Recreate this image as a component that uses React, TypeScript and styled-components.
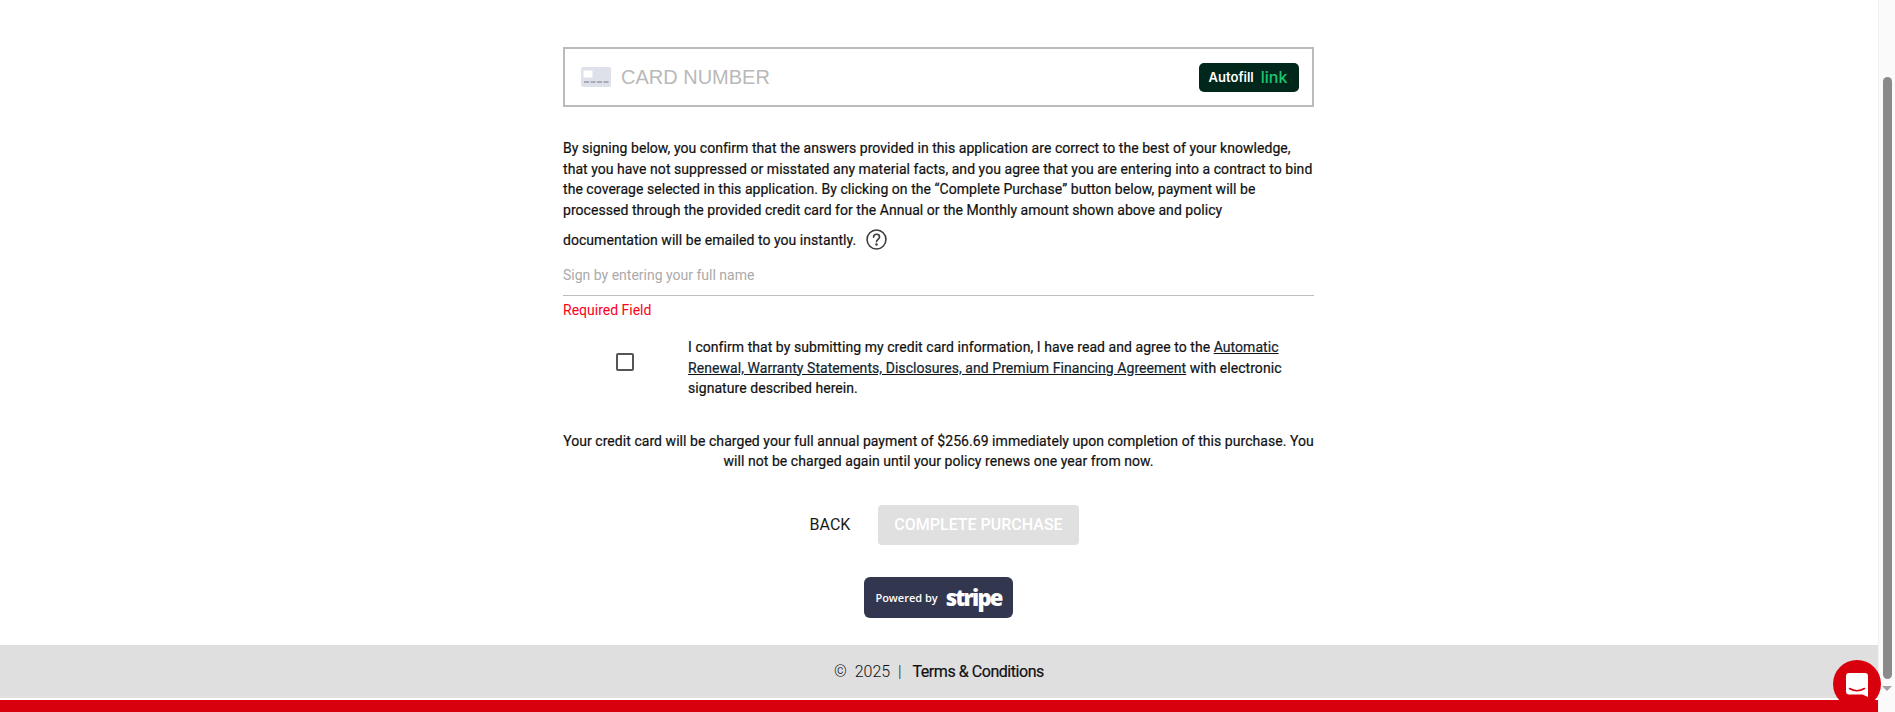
import { createGlobalStyle, css, styled } from "styled-components";

const GlobalStyle = createGlobalStyle`
  html, body {
    margin: 0;
    padding: 0;
    height: 100%;
    overflow: hidden;
    background: #fff;
  }
  * { box-sizing: border-box; }
`;

const CardIcon = () => (
  <svg width="30" height="20" viewBox="0 0 30 20">
    <rect width="30" height="20" rx="2" fill="#dfe1ea" />
    <rect x="2.500" y="3.500" width="9" height="7" fill="#fff" />
    <g fill="#a9adbc">
      <rect x="3" y="14" width="5" height="2" />
      <rect x="9.500" y="14" width="5" height="2" />
      <rect x="16" y="14" width="5" height="2" />
      <rect x="22.500" y="14" width="5" height="2" />
    </g>
  </svg>
);

const HelpIcon = () => (
  <svg width="21" height="21" viewBox="0 0 20 20" fill="none" stroke="#3c3c3c" strokeWidth="1.500">
    <circle cx="10" cy="10" r="9" />
    <path d="M7.200 7.800c0-1.700 1.300-2.800 2.900-2.800s2.800 1 2.800 2.500c0 2.300-2.900 2.300-2.900 4.700" strokeLinecap="round" />
    <circle cx="10" cy="14.800" r="0.500" fill="#3c3c3c" />
  </svg>
);

const ChatIcon = () => (
  <svg width="22" height="24" viewBox="0 0 22 24">
    <path d="M3 0h16a3 3 0 0 1 3 3v21l-5.500-2.500H3a3 3 0 0 1-3-3V3a3 3 0 0 1 3-3z" fill="#fff" />
    <path d="M3.500 15.500c4.500 2.600 10.500 2.600 15 0" fill="none" stroke="#d9000d" strokeWidth="1.500" strokeLinecap="round" />
  </svg>
);

const App = () => {
  return (
    <Page>
      <GlobalStyle />
      <Main>
        <Content>
          <CardField>
            <CardIcon />
            <CardPlaceholder>CARD NUMBER</CardPlaceholder>
            <AutofillButton>
              Autofill <LinkWord>link</LinkWord>
            </AutofillButton>
          </CardField>
          <Legal>
            By signing below, you confirm that the answers provided in this application are
            correct to the best of your knowledge,
            <br />
            that you have not suppressed or misstated any material facts, and you agree that you
            are entering into a contract to bind
            <br />
            the coverage selected in this application. By clicking on the “Complete Purchase”
            button below, payment will be
            <br />
            processed through the provided credit card for the Annual or the Monthly amount shown
            above and policy
          </Legal>
          <LegalLast>
            documentation will be emailed to you instantly.
            <HelpIcon />
          </LegalLast>
          <SignatureInput placeholder="Sign by entering your full name" />
          <RequiredText>Required Field</RequiredText>
          <ConfirmRow>
            <CheckCell>
              <CheckBox />
            </CheckCell>
            <ConfirmText>
              I confirm that by submitting my credit card information, I have read and agree to
              the{" "}
              <ConfirmLink href="#">
                Automatic Renewal, Warranty Statements, Disclosures, and Premium Financing Agreement
              </ConfirmLink>{" "}
              with electronic signature described herein.
            </ConfirmText>
          </ConfirmRow>
          <ChargeText>
            Your credit card will be charged your full annual payment of $256.69 immediately upon
            completion of this purchase. You will not be charged again until your policy renews
            one year from now.
          </ChargeText>
          <Actions>
            <BackButton>BACK</BackButton>
            <PurchaseButton disabled>COMPLETE PURCHASE</PurchaseButton>
          </Actions>
          <StripeBadge>
            <PoweredBy>Powered by</PoweredBy>
            <StripeWord>stripe</StripeWord>
          </StripeBadge>
        </Content>
        <Footer>
          <Copyright>©&nbsp; 2025 &nbsp;|</Copyright>
          <TermsLink>Terms &amp; Conditions</TermsLink>
        </Footer>
        <RedBar />
      </Main>
      <ScrollTrack>
        <ScrollThumb />
        <ScrollArrow />
      </ScrollTrack>
      <ChatBubble>
        <ChatIcon />
      </ChatBubble>
    </Page>
  );
};

const bodyText = css`
  font-size: 14px;
  line-height: 20.500px;
  letter-spacing: 0.045px;
  -webkit-text-stroke: 0.2px #111;
`;

const Page = styled.div`
  display: flex;
  height: 712px;
  font-family: Roboto, "Liberation Sans", sans-serif;
  color: #111;
`;

const Main = styled.div`
  flex: 1;
  display: flex;
  flex-direction: column;
  min-width: 0;
`;

const Content = styled.div`
  flex: 1;
  display: flex;
  flex-direction: column;
  width: 751px;
  margin-left: 563px;
  padding-top: 47px;
`;

const CardField = styled.div`
  display: flex;
  align-items: center;
  height: 60px;
  padding: 0 13px 0 16px;
  border: 2px solid #bbbbbd;
`;

const CardPlaceholder = styled.span`
  flex: 1;
  margin-left: 10px;
  font-family: "Liberation Sans", Arial, sans-serif;
  font-size: 20px;
  color: #b9b9b9;
`;

const AutofillButton = styled.div`
  display: flex;
  align-items: center;
  justify-content: center;
  gap: 7px;
  width: 100px;
  height: 29px;
  padding-right: 2px;
  border-radius: 5px;
  background: #01261b;
  font-family: Inter, sans-serif;
  font-size: 13px;
  font-weight: 600;
  color: #fff;
`;

const LinkWord = styled.span`
  font-size: 16px;
  font-weight: 500;
  color: #1bc872;
`;

const Legal = styled.p`
  ${bodyText}
  margin: 31px 0 0;
  white-space: nowrap;
`;

const LegalLast = styled.div`
  ${bodyText}
  display: flex;
  align-items: center;
  gap: 10px;
  margin-top: 9px;
  line-height: 20px;
`;

const SignatureInput = styled.input`
  height: 39px;
  margin-top: 7px;
  padding: 0 0 2px;
  border: 0;
  border-bottom: 1px solid #bdbdbd;
  outline: none;
  font-family: inherit;
  font-size: 14px;

  &::placeholder {
    color: #aaaaaa;
  }
`;

const RequiredText = styled.div`
  margin-top: 4px;
  font-size: 14px;
  line-height: 20px;
  color: #fb0019;
`;

const ConfirmRow = styled.div`
  display: flex;
  align-items: center;
  margin-top: 17px;
`;

const CheckCell = styled.div`
  display: flex;
  justify-content: center;
  width: 123px;
  margin-right: 2px;
  padding-bottom: 12px;
  flex-shrink: 0;
`;

const CheckBox = styled.div`
  width: 18px;
  height: 18px;
  border: 2px solid #555;
  border-radius: 2px;
`;

const ConfirmText = styled.p`
  ${bodyText}
  margin: 0;
  letter-spacing: 0.055px;
`;

const ConfirmLink = styled.a`
  color: #10293a;
  text-decoration: underline;
`;

const ChargeText = styled.p`
  ${bodyText}
  margin: 32px 0 0;
  letter-spacing: 0.055px;
  text-align: center;
`;

const Actions = styled.div`
  display: flex;
  justify-content: center;
  gap: 16px;
  margin-top: 33px;
`;

const BackButton = styled.button`
  width: 64px;
  height: 40px;
  padding: 0;
  border: 0;
  background: none;
  font-family: inherit;
  font-size: 16px;
  color: #1a1a1a;
`;

const PurchaseButton = styled.button`
  width: 201px;
  height: 40px;
  padding: 0;
  border: 0;
  border-radius: 4px;
  background: #e0e0e0;
  font-family: inherit;
  font-size: 16px;
  font-weight: 500;
  color: #fff;
`;

const StripeBadge = styled.div`
  display: flex;
  align-items: center;
  justify-content: center;
  gap: 8px;
  align-self: center;
  width: 149px;
  height: 41px;
  margin-top: 32px;
  border-radius: 6px;
  background: #32364e;
  color: #fff;
`;

const PoweredBy = styled.span`
  font-family: "Open Sans", sans-serif;
  font-size: 11px;
  font-weight: 600;
`;

const StripeWord = styled.span`
  font-family: "Open Sans", sans-serif;
  font-size: 22px;
  font-weight: 800;
  letter-spacing: -1.800px;
  line-height: 1;
`;

const Footer = styled.div`
  display: flex;
  align-items: center;
  justify-content: center;
  height: 53px;
  background: #dfdfdf;
  font-size: 16px;
`;

const Copyright = styled.span`
  font-weight: 300;
  white-space: pre;
`;

const TermsLink = styled.span`
  margin-left: 11px;
  letter-spacing: -0.450px;
  -webkit-text-stroke: 0.2px #111;
  color: #111;
`;

const RedBar = styled.div`
  height: 12px;
  margin-top: 2px;
  background: #d9000d;
`;

const ScrollTrack = styled.div`
  position: relative;
  width: 17px;
  background: #fafafa;
  border-left: 1px solid #f0f0f0;
`;

const ScrollThumb = styled.div`
  position: absolute;
  top: 77px;
  left: 4px;
  width: 9px;
  height: 602px;
  border-radius: 5px;
  background: #8a8a8a;
`;

const ScrollArrow = styled.div`
  position: absolute;
  top: 686px;
  left: 3px;
  border-left: 5px solid transparent;
  border-right: 5px solid transparent;
  border-top: 5px solid #a0a0a0;
`;

const ChatBubble = styled.div`
  position: fixed;
  right: 14px;
  bottom: 4px;
  display: flex;
  align-items: center;
  justify-content: center;
  width: 48px;
  height: 48px;
  padding-top: 2px;
  border-radius: 50%;
  background: #d9000d;
`;

export default App;
